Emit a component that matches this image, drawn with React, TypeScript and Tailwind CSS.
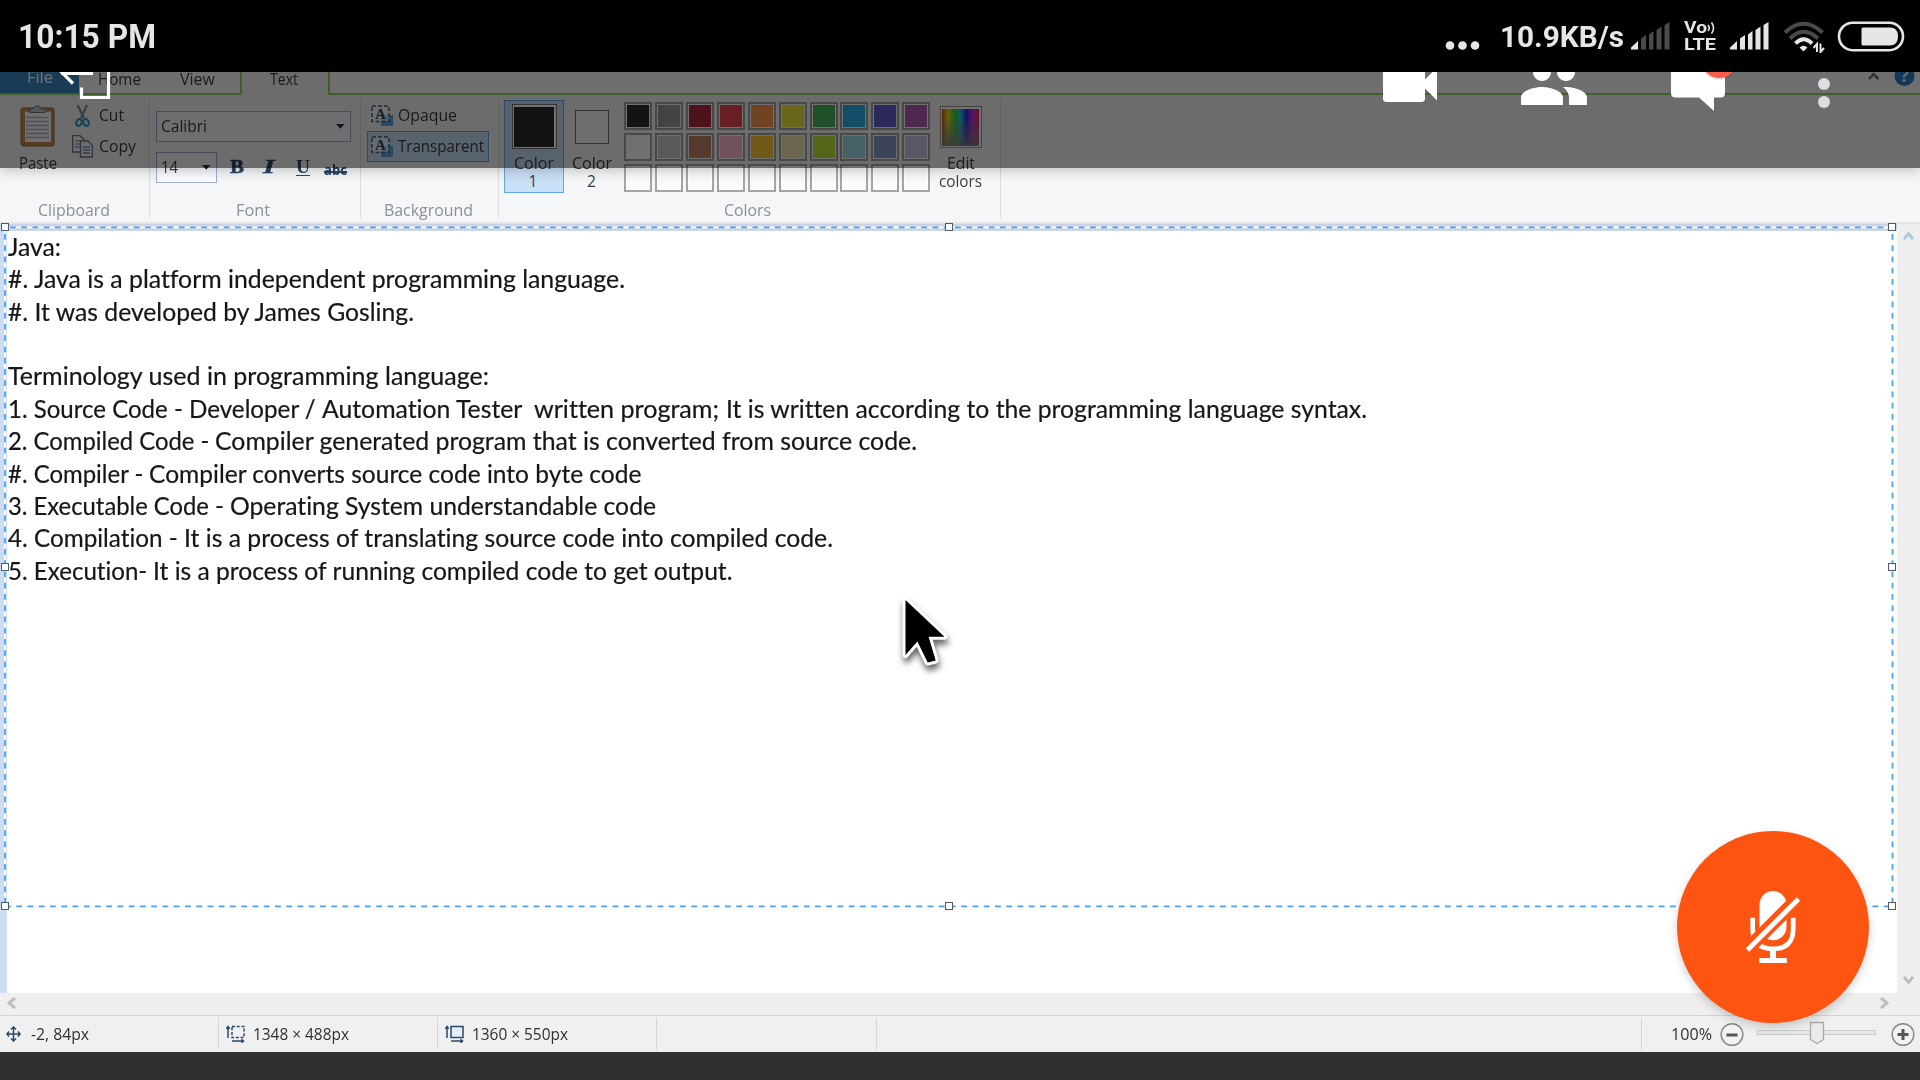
import { useLayoutEffect, useRef, type ReactNode } from "react";

/** Single line of text, condensed or stretched to fill its box's width. */
function Fit({ children, className = "" }: { children: ReactNode; className?: string }) {
  const box = useRef<HTMLDivElement>(null);
  const ink = useRef<HTMLSpanElement>(null);
  useLayoutEffect(() => {
    const b = box.current;
    const s = ink.current;
    if (!b || !s || !s.offsetWidth) return;
    s.style.transform = `scaleX(${b.getBoundingClientRect().width / s.getBoundingClientRect().width})`;
  }, []);
  return (
    <div ref={box} className={`shrink-0 whitespace-pre ${className}`}>
      <span ref={ink} className="inline-block origin-left">{children}</span>
    </div>
  );
}

const PALETTE = [
  "bg-[#2d2d2d]", "bg-[#999999]", "bg-[#b02c42]", "bg-[#ea4850]", "bg-[#ff9850]", "bg-[#f0e83a]", "bg-[#46b45c]", "bg-[#28b0ea]", "bg-[#6260d0]", "bg-[#b45cb4]",
  "bg-white", "bg-[#cacaca]", "bg-[#c48468]", "bg-[#ffb8d2]", "bg-[#ffc832]", "bg-[#eee6b4]", "bg-[#bce638]", "bg-[#a2dcee]", "bg-[#869cc8]", "bg-[#cec6ea]",
];

/** Lines of the text box; each is a run of [width, text] segments. */
const NOTES: [string, string][][] = [
  [["w-[53px]", "Java:"]],
  [["w-[617px]", "#. Java is a platform independent programming language."]],
  [["w-[406px]", "#. It was developed by James Gosling."]],
  [],
  [["w-[481px]", "Terminology used in programming language:"]],
  [
    ["w-[181px]", "1. Source Code - "],
    ["w-[133px]", "Developer / "],
    ["w-[212.500px]", "Automation Tester  "],
    ["w-[191.500px]", "written program; "],
    ["w-[641px]", "It is written according to the programming language syntax."],
  ],
  [["w-[207.500px]", "2. Compiled Code - "], ["w-[702px]", "Compiler generated program that is converted from source code."]],
  [["w-[141.500px]", "#. Compiler - "], ["w-[492.500px]", "Compiler converts source code into byte code"]],
  [["w-[222px]", "3. Executable Code - "], ["w-[426px]", "Operating System understandable code"]],
  [["w-[176px]", "4. Compilation - "], ["w-[649px]", "It is a process of translating source code into compiled code."]],
  [["w-[145.500px]", "5. Execution- "], ["w-[579.500px]", "It is a process of running compiled code to get output."]],
];

function Signal({ rest }: { rest: string }) {
  return (
    <svg className="h-[28px] w-[39px] shrink-0" viewBox="0 0 39 28">
      <path d="M0 27.500v-2l7-6.500v8.500z" fill="#e6e6e6" />
      <g fill={rest}>
        <path d="M10 27.500V16.500l5-3.500v14.500z" />
        <path d="M18 27.500V12.500l4.500-3.500v18.500z" />
        <path d="M25.500 27.500V8l5-3.500v23z" />
        <path d="M33.500 27.500V3L38.500 0v27.500z" />
      </g>
    </svg>
  );
}

function StatusBar() {
  return (
    <header className="relative z-20 flex h-[72px] shrink-0 items-start bg-black pl-[18px] font-['Roboto'] font-bold text-[#e6e6e6]">
      <Fit className="w-[138px] text-[32.500px] leading-[75px]">10:15 PM</Fit>
      <svg className="ml-[1289px] mt-[40px] h-[11px] w-[35px]" viewBox="0 0 35 11" fill="#e6e6e6">
        <circle cx="5" cy="5.500" r="4.300" />
        <circle cx="17.500" cy="5.500" r="4.300" />
        <circle cx="30" cy="5.500" r="4.300" />
      </svg>
      <Fit className="ml-[20px] w-[124px] text-[30px] leading-[74px]">10.9KB/s</Fit>
      <div className="ml-[7px] mt-[21.500px]"><Signal rest="#4a4a4a" /></div>
      <div className="ml-[14px] mt-[18px] w-[33px]">
        <div className="flex h-[18px] items-start">
          <Fit className="w-[23px] text-[17px] leading-[18px]">Vo</Fit>
          <svg className="mt-[4px] h-[12px] w-[9px]" viewBox="0 0 9 12" fill="none" stroke="#e6e6e6" strokeWidth="1.600">
            <path d="M1 3q2.500 3 0 6M4.500.5q4 5.500 0 11" />
          </svg>
        </div>
        <Fit className="w-[32px] text-[17px] leading-[16px]">LTE</Fit>
      </div>
      <div className="ml-[13px] mt-[21.500px]"><Signal rest="#e6e6e6" /></div>
      <svg className="ml-[14px] mt-[21px] h-[32px] w-[42px]" viewBox="0 0 42 32" fill="none">
        <path d="M2 11.500Q20.500-6 39.500 11.500" stroke="#4a4a4a" strokeWidth="4" />
        <path d="M7 17.500Q20.500 4 35 17.500" stroke="#4a4a4a" strokeWidth="4" />
        <path d="M12.500 22.500Q20.500 14 29 22.500" stroke="#e6e6e6" strokeWidth="4" />
        <path d="M16.500 26.500q4-3.500 8 0l-4 4z" fill="#e6e6e6" />
        <path d="M34 31V23l-3.500 4M37.500 22.500v8.500l3.500-4" stroke="#e6e6e6" strokeWidth="2" />
      </svg>
      <svg className="ml-[12px] mt-[21px] h-[31px] w-[68px]" viewBox="0 0 68 31">
        <rect x="2" y="1.700" width="64" height="27.500" rx="13.700" fill="none" stroke="#e6e6e6" strokeWidth="2.600" />
        <path d="M26 6.500H53q8 0 8 9t-8 9H26q-1.500 0-1.500-1.500V8q0-1.500 1.500-1.500z" fill="#e6e6e6" />
      </svg>
    </header>
  );
}

function TabRow() {
  return (
    <div className="flex h-[23px] shrink-0 bg-[#fcfcfc] text-[16px] leading-[14px] text-[#3d3d3d]">
      <div className="h-[21px] w-[79px] bg-[#3c87c4] pl-[27px] leading-[11px] text-white"><Fit className="w-[26px]">File</Fit></div>
      <div className="-ml-[79px] flex w-[242px] border-b-2 border-r-2 border-[#90d860] pl-[98px]">
        <Fit className="w-[43px]">Home</Fit>
        <Fit className="ml-[39px] w-[35px]">View</Fit>
      </div>
      <div className="w-[86px] bg-[#f5f6f7] pl-[28px]"><Fit className="w-[28px]">Text</Fit></div>
      <div className="flex-1 border-b-2 border-l-2 border-[#90d860]">
        <svg className="ml-auto h-[16px] w-[52px]" viewBox="0 0 52 16">
          <path d="M1 7L5.500 2l5 5" fill="none" stroke="#707070" strokeWidth="2.500" />
          <circle cx="36.500" cy="4" r="10" fill="#2c7cc0" />
          <text x="36.500" y="10" textAnchor="middle" fontFamily="Open Sans" fontWeight="700" fontSize="18" fill="#e8f2fa">?</text>
        </svg>
      </div>
    </div>
  );
}

function Group({ label, labelWidth, className, children }: { label: string; labelWidth: string; className: string; children: ReactNode }) {
  return (
    <section className={`relative flex shrink-0 flex-col ${className}`}>
      <div className="flex h-[101px] shrink-0">{children}</div>
      <div className="flex h-[26px] shrink-0 leading-[28px] text-[#8b9098]"><Fit className={labelWidth}>{label}</Fit></div>
      <i className="absolute bottom-[4px] right-0 top-[3px] w-px bg-[#dcdee0]" />
    </section>
  );
}

function SelectIcon() {
  return (
    <svg className="h-[22px] w-[23px] shrink-0" viewBox="0 0 23 22">
      <path d="M10 10h12v11H10z" fill="#5fa4dc" />
      <rect x="1" y="1" width="17" height="15.500" fill="#fff" fillOpacity="0.6" stroke="#3c6286" strokeWidth="1.500" strokeDasharray="4 2" />
      <text x="9.500" y="14" textAnchor="middle" fontFamily="Liberation Serif" fontWeight="700" fontSize="15" fill="#2c4a6c">A</text>
    </svg>
  );
}

function Caret() {
  return <svg className="h-[5px] w-[9px]" viewBox="0 0 9 5"><path d="M0 0h8.500L4.250 4.800z" fill="#333" /></svg>;
}

function Ribbon() {
  return (
    <div className="flex h-[127px] shrink-0 bg-[#f5f6f7] text-[15.500px] text-[#3c3c40]">
      <Group label="Clipboard" labelWidth="ml-[38px] w-[72px]" className="w-[150px]">
        <div className="ml-[18px] flex w-[39px] flex-col items-center pt-[10px]">
          <svg className="h-[42px] w-[35px]" viewBox="0 0 35 42">
            <rect x="1" y="3" width="33" height="38" rx="2.500" fill="#c08c4c" stroke="#93632b" />
            <path d="M5 6.500h26V37H5z" fill="#fcfcff" />
            <path d="M6 12.500h23M6 16.500h23M6 20.500h23M6 24.500h23M6 28.500h23M6 32.500h23" stroke="#aab8cc" strokeWidth="1.300" />
            <path d="M8 6.500q2-3 6-3.500 3-4.500 6.500 0 5 .5 6.500 3.500l-3 1H11z" fill="#c0c2c6" stroke="#707276" />
          </svg>
          <Fit className="mt-[5px] w-[38px] leading-[23px]">Paste</Fit>
        </div>
        <div className="ml-[15px] pt-[5px] leading-[31px]">
          <div className="flex h-[31px] items-center gap-[6px]">
            <svg className="h-[22px] w-[21px]" viewBox="0 0 21 22" fill="none">
              <path d="M5.500 0L12 13M15 0L9 13" stroke="#8094a8" strokeWidth="2.300" />
              <ellipse cx="7" cy="17.500" rx="2.600" ry="3.500" stroke="#3290cc" strokeWidth="2" transform="rotate(20 7 17.500)" />
              <ellipse cx="14" cy="17.500" rx="2.600" ry="3.500" stroke="#3290cc" strokeWidth="2" transform="rotate(-20 14 17.500)" />
            </svg>
            <Fit className="w-[25px]">Cut</Fit>
          </div>
          <div className="flex h-[31px] items-center gap-[6px]">
            <svg className="h-[23px] w-[21px]" viewBox="0 0 21 23" fill="#f8fbff" stroke="#75777c" strokeWidth="1.300">
              <path d="M.7 .7H8L12.500 5V17H.7z" />
              <path d="M3 6h6M3 9h6M3 12h6" stroke="#88a8c8" />
              <path d="M8.500 6H16l4.300 4.500V22H8.500z" />
              <path d="M11 12h7M11 15h7M11 18h7" stroke="#5f92c0" />
            </svg>
            <Fit className="w-[37px]">Copy</Fit>
          </div>
        </div>
      </Group>
      <Group label="Font" labelWidth="ml-[86px] w-[34px]" className="w-[211px]">
        <div className="ml-[6px] pt-[16px]">
          <div className="flex h-[31px] w-[195px] items-center justify-between border border-[#a3aed0] bg-[#fafbff] pl-[4px] pr-[5px]">
            <Fit className="w-[46px]">Calibri</Fit>
            <Caret />
          </div>
          <div className="mt-[10px] flex h-[31px] items-center text-[#2c4464]">
            <div className="flex h-[31px] w-[61px] items-center justify-between border border-[#a3aed0] bg-[#fafbff] pl-[4px] pr-[5px] text-[#3c3c40]">
              <Fit className="w-[17px]">14</Fit>
              <Caret />
            </div>
            <Fit className="ml-[13px] w-[14px] font-['Liberation_Serif'] text-[19px] font-bold [-webkit-text-stroke:0.5px_#2c4464]">B</Fit>
            <Fit className="ml-[19px] w-[12px] font-['Liberation_Serif'] text-[19px] font-bold italic [-webkit-text-stroke:0.3px_#2c4464]">I</Fit>
            <Fit className="ml-[21px] w-[14px] border-b-[1.500px] border-[#2c4464] font-['Liberation_Serif'] text-[19px] font-bold leading-[16px]">U</Fit>
            <div className="relative ml-[14px] mt-[3px]">
              <Fit className="w-[23px] text-[15px] font-bold leading-[16px]">abc</Fit>
              <i className="absolute inset-x-0 top-[10px] h-[1.500px] bg-[#2c4464]" />
            </div>
          </div>
        </div>
      </Group>
      <Group label="Background" labelWidth="ml-[22.500px] w-[89px]" className="w-[138px]">
        <div className="ml-[6px] pt-[5px] leading-[29px]">
          <div className="flex h-[31px] items-center gap-[4px] pl-[4px]">
            <SelectIcon />
            <Fit className="w-[59px]">Opaque</Fit>
          </div>
          <div className="flex h-[31px] w-[122px] items-center gap-[4px] border border-[#64a6e8] bg-[#cbe2f8] pl-[3px]">
            <SelectIcon />
            <Fit className="w-[86px]">Transparent</Fit>
          </div>
        </div>
      </Group>
      <Group label="Colors" labelWidth="ml-[225px] w-[47px]" className="w-[502px]">
        <div className="ml-[5px] mt-[5px] flex h-[93px] w-[60px] flex-col items-center border border-[#64a6e8] bg-[#c9e0f7] pt-[3px] leading-[18px]">
          <div className="size-[45px] border-[1.500px] border-[#777] bg-white p-[1.500px]"><div className="size-full bg-[#2d2d2d]" /></div>
          <Fit className="mt-[5px] w-[40px]">Color</Fit>
          <span className="-ml-[2px]">1</span>
        </div>
        <div className="ml-[7px] flex w-[41px] flex-col items-center pt-[15px] leading-[18px]">
          <div className="size-[34px] border-[1.500px] border-[#777] bg-[#fafafa]" />
          <Fit className="mt-[10px] w-[40px]">Color</Fit>
          <span>2</span>
        </div>
        <div className="ml-[12px] mt-[6.500px] grid h-[90px] grid-cols-[repeat(10,28px)] grid-rows-[repeat(3,28px)] gap-x-[2.930px] gap-y-[3px]">
          {Array.from({ length: 30 }, (_, i) => (
            <div key={i} className="border-2 border-[#a4a4a4] bg-white p-px">
              <div className={`size-full ${PALETTE[i] ?? "bg-[#f9fafb]"}`} />
            </div>
          ))}
        </div>
        <div className="ml-[9px] flex w-[43px] flex-col items-center pt-[11px] leading-[18px]">
          <div className="size-[42px] border-[1.500px] border-[#a49898] bg-white p-[1.500px]">
            <div className="size-full bg-[linear-gradient(to_bottom,transparent_20%,#808080e0),linear-gradient(to_right,#d05020,#e8d820_15%,#30d840_36%,#28c8d8_50%,#2828e8_66%,#d828d8_84%,#e02860)]" />
          </div>
          <Fit className="mt-[6px] w-[28px]">Edit</Fit>
          <Fit className="w-[43px]">colors</Fit>
        </div>
      </Group>
    </div>
  );
}

const HANDLES = [
  "left-[1px] top-[-1px]", "left-[945px] top-[-1px]", "left-[1888px] top-[-1px]",
  "left-[1px] top-[339px]", "left-[1888px] top-[339px]",
  "left-[1px] top-[678px]", "left-[945px] top-[678px]", "left-[1888px] top-[678px]",
];

function Canvas() {
  return (
    <main className="relative flex h-[769px] shrink-0 bg-[#efefef]">
      <div className="w-[7px] bg-[#cddcf1]" />
      <div className="w-[1890px] border-t-[7px] border-[#cbd5e5] bg-white">
        <div className="pl-[0.500px] font-['Lato'] text-[24.200px] leading-[32.360px] text-[#161616] [-webkit-text-stroke:0.2px_#161616] [font-variant-ligatures:none]">
          {NOTES.map((segments, i) => (
            <div key={i} className="flex h-[32.360px]">
              {segments.map(([width, text]) => (
                <Fit key={text} className={width}>{text}</Fit>
              ))}
            </div>
          ))}
        </div>
      </div>
      <svg className="mx-auto h-[769px] w-[11px]" viewBox="0 0 11 769" fill="none" strokeWidth="3">
        <path d="M1 15l4.500-5.500L10 15" stroke="#b0c8dc" />
        <path d="M1 753l4.500 5.500L10 753" stroke="#bebebe" />
      </svg>
      <svg className="absolute left-0 top-0 h-[700px] w-[1900px]" viewBox="0 0 1900 700" fill="none" strokeWidth="1.800">
        <path d="M5 3.300H1892M5 3V682" stroke="#fff" />
        <path d="M10 3.300H1892M5 682.300H1892M5 10V682M1892.500 10V682" stroke="#4aa0f4" strokeDasharray="5.800 5.450" />
      </svg>
      {HANDLES.map((at) => (
        <i key={at} className={`absolute size-[8px] border-[1.500px] border-[#4e5a6a] bg-white ${at}`} />
      ))}
    </main>
  );
}

function BottomBars() {
  return (
    <>
      <div className="flex h-[22px] shrink-0 items-center justify-between bg-[#efefef] pb-[2px] pl-[7px] pr-[31px]">
        <svg className="h-[12px] w-[9px]" viewBox="0 0 9 12" fill="none"><path d="M8 1L2 6l6 5" stroke="#bebebe" strokeWidth="3" /></svg>
        <svg className="h-[12px] w-[9px]" viewBox="0 0 9 12" fill="none"><path d="M1 1l6 5-6 5" stroke="#bebebe" strokeWidth="3" /></svg>
      </div>
      <footer className="flex h-[37px] shrink-0 items-center border-t-[1.500px] border-[#d4d4d4] bg-[#f0f0f0] text-[16px] leading-[34px] text-[#303030]">
        <div className="flex h-[32px] w-[219px] items-center border-r border-[#d6d6d6] pl-[6px]">
          <svg className="h-[16px] w-[15px]" viewBox="0 0 15 16" fill="none" stroke="#2a4868" strokeWidth="1.500">
            <path d="M7.500 1v14M1 8h13M5 3.500L7.500 1 10 3.500M5 12.500L7.500 15l2.500-2.500M3 5.500L1 8l2 2.500M12 5.500L14 8l-2 2.500" />
          </svg>
          <Fit className="ml-[10px] w-[58px]">-2, 84px</Fit>
        </div>
        <div className="flex h-[32px] w-[219px] items-center border-r border-[#d6d6d6] pl-[7px]">
          <svg className="h-[18px] w-[19px]" viewBox="0 0 19 18" fill="none" stroke="#2a4868" strokeWidth="1.500">
            <path d="M2 13V2M.3 3.800L2 1.500l1.700 2.300M6 16h11.500M15.500 14.300l2 1.700-2 1.700" />
            <rect x="6" y="1.500" width="12" height="11" strokeDasharray="3 1.700" />
          </svg>
          <Fit className="ml-[8px] w-[96px]">1348 × 488px</Fit>
        </div>
        <div className="flex h-[32px] w-[219px] items-center border-r border-[#d6d6d6] pl-[7px]">
          <svg className="h-[18px] w-[19px]" viewBox="0 0 19 18" fill="none" stroke="#2a4868" strokeWidth="1.500">
            <path d="M2 13V2M.3 3.800L2 1.500l1.700 2.300M6 16h11.500M15.500 14.300l2 1.700-2 1.700" />
            <rect x="6" y="1.500" width="12" height="11" fill="#e4eef8" />
          </svg>
          <Fit className="ml-[8px] w-[96px]">1360 × 550px</Fit>
        </div>
        <div className="h-[32px] w-[220px] border-r border-[#d6d6d6]" />
        <div className="h-[32px] w-[765px] border-r border-[#d6d6d6]" />
        <Fit className="ml-[29px] w-[41px]">100%</Fit>
        <svg className="ml-[8px] h-[24px] w-[24px]" viewBox="0 0 24 24">
          <circle cx="12" cy="12.500" r="10.800" fill="#f2f2f2" stroke="#858585" strokeWidth="1.400" />
          <path d="M6.500 13h11" stroke="#555" strokeWidth="3" />
        </svg>
        <div className="relative ml-[13px] h-[24px] w-[119px]">
          <div className="mt-[8px] h-[5px] border border-[#cccccc] bg-[#e6e8e8]" />
          <svg className="absolute left-[52px] top-[-1px] h-[24px] w-[16px]" viewBox="0 0 16 24"><path d="M1.500 1.500h13v17L8 22.500l-6.500-4z" fill="#ebebeb" stroke="#a9a9a9" strokeWidth="1.300" /></svg>
        </div>
        <svg className="ml-[15px] h-[24px] w-[24px]" viewBox="0 0 24 24">
          <circle cx="12" cy="12.500" r="10.800" fill="#f2f2f2" stroke="#858585" strokeWidth="1.400" />
          <path d="M6.500 12.500h11M12 7v11" stroke="#555" strokeWidth="3" />
        </svg>
      </footer>
      <div className="h-[28px] shrink-0 bg-[#303030]" />
    </>
  );
}

function MeetingBar() {
  return (
    <div className="absolute left-0 top-[48px] z-10 flex h-[120px] w-full items-start bg-black/56 shadow-[0_2px_12px_rgba(0,0,0,0.24)]">
      <svg className="ml-[54px] h-[60px] w-[60px]" viewBox="0 0 60 60" fill="none" stroke="#fff" strokeWidth="3.200">
        <path d="M27.500 39.500V49.500H54.500V4H27.500V12M39 25.300H7M19 14L7.500 24l11.500 11.500" />
      </svg>
      <svg className="ml-[1260px] size-[72px]" viewBox="0 0 24 24" fill="#fff">
        <path d="M17 10.500V7c0-.55-.45-1-1-1H4c-.55 0-1 .45-1 1v10c0 .55.45 1 1 1h12c.55 0 1-.45 1-1v-3.500l4 4v-11l-4 4z" />
      </svg>
      <svg className="ml-[72px] size-[72px]" viewBox="0 0 24 24" fill="#fff">
        <path d="M16 11c1.660 0 2.990-1.340 2.990-3S17.660 5 16 5c-1.660 0-3 1.340-3 3s1.340 3 3 3zm-8 0c1.660 0 2.990-1.340 2.990-3S9.660 5 8 5C6.340 5 5 6.340 5 8s1.340 3 3 3zm0 2c-2.330 0-7 1.170-7 3.500V19h14v-2.500c0-2.330-4.670-3.500-7-3.500zm8 0c-.29 0-.62.02-.97.05 1.160.84 1.970 1.970 1.970 3.450V19h6v-2.500c0-2.330-4.670-3.500-7-3.500z" />
      </svg>
      <svg className="ml-[72px] h-[66px] w-[90px]" viewBox="0 0 90 66">
        <path d="M9 5h54v40q0 4.500-4.500 4.500H52V63L37 49.500H13.500Q9 49.500 9 45z" fill="#fff" />
        <circle cx="57.500" cy="14" r="18" fill="#000" opacity="0.12" />
        <circle cx="57.500" cy="12" r="18" fill="#fd5c4a" />
      </svg>
      <svg className="ml-[63px] h-[62px] w-[18px]" viewBox="0 0 18 62" fill="#dadee2">
        <circle cx="9" cy="18" r="6" />
        <circle cx="9" cy="36" r="6" />
        <circle cx="9" cy="54" r="6" />
      </svg>
    </div>
  );
}

export default function App() {
  return (
    <div className="relative flex h-[1080px] w-[1920px] flex-col overflow-hidden bg-[#303030] font-['Open_Sans',sans-serif]">
      <StatusBar />
      <TabRow />
      <Ribbon />
      <div className="h-[2px] shrink-0 bg-[#e2e4e6]" />
      <Canvas />
      <BottomBars />
      <MeetingBar />
      <svg className="absolute left-[894.500px] top-[590px] h-[90px] w-[64px] drop-shadow-[1px_5px_3px_rgba(0,0,0,0.6)]" viewBox="0 0 64 90">
        <path d="M10.500 10L49.500 46.700H33.600L40.700 70.500 32.700 72.500 22.400 51.500 10.500 65z" fill="#000" stroke="#fff" strokeWidth="6" strokeLinejoin="round" paintOrder="stroke" />
      </svg>
      <button className="absolute left-[1677px] top-[831px] flex size-[192px] items-center justify-center rounded-full bg-[#fd5412] shadow-[0_4px_10px_rgba(0,0,0,0.18)]">
        <svg className="size-[76px]" viewBox="0 0 76 76">
          <g fill="none" stroke="#fff">
            <path d="M17.700 28.700v10.800q0 20.300 20.300 20.300t20.200-20.300v-10.800" strokeWidth="4.700" />
            <path d="M38 60v11" strokeWidth="6" />
            <path d="M24.300 71.500h27.500" strokeWidth="5" />
          </g>
          <rect x="24.500" y="2" width="27" height="49.300" rx="13.500" fill="#fff" />
          <path d="M8 64.500L66 6.500" stroke="#fd5412" strokeWidth="13.500" />
          <path d="M12.500 61L63.500 10" stroke="#fff" strokeWidth="4.800" />
        </svg>
      </button>
    </div>
  );
}
